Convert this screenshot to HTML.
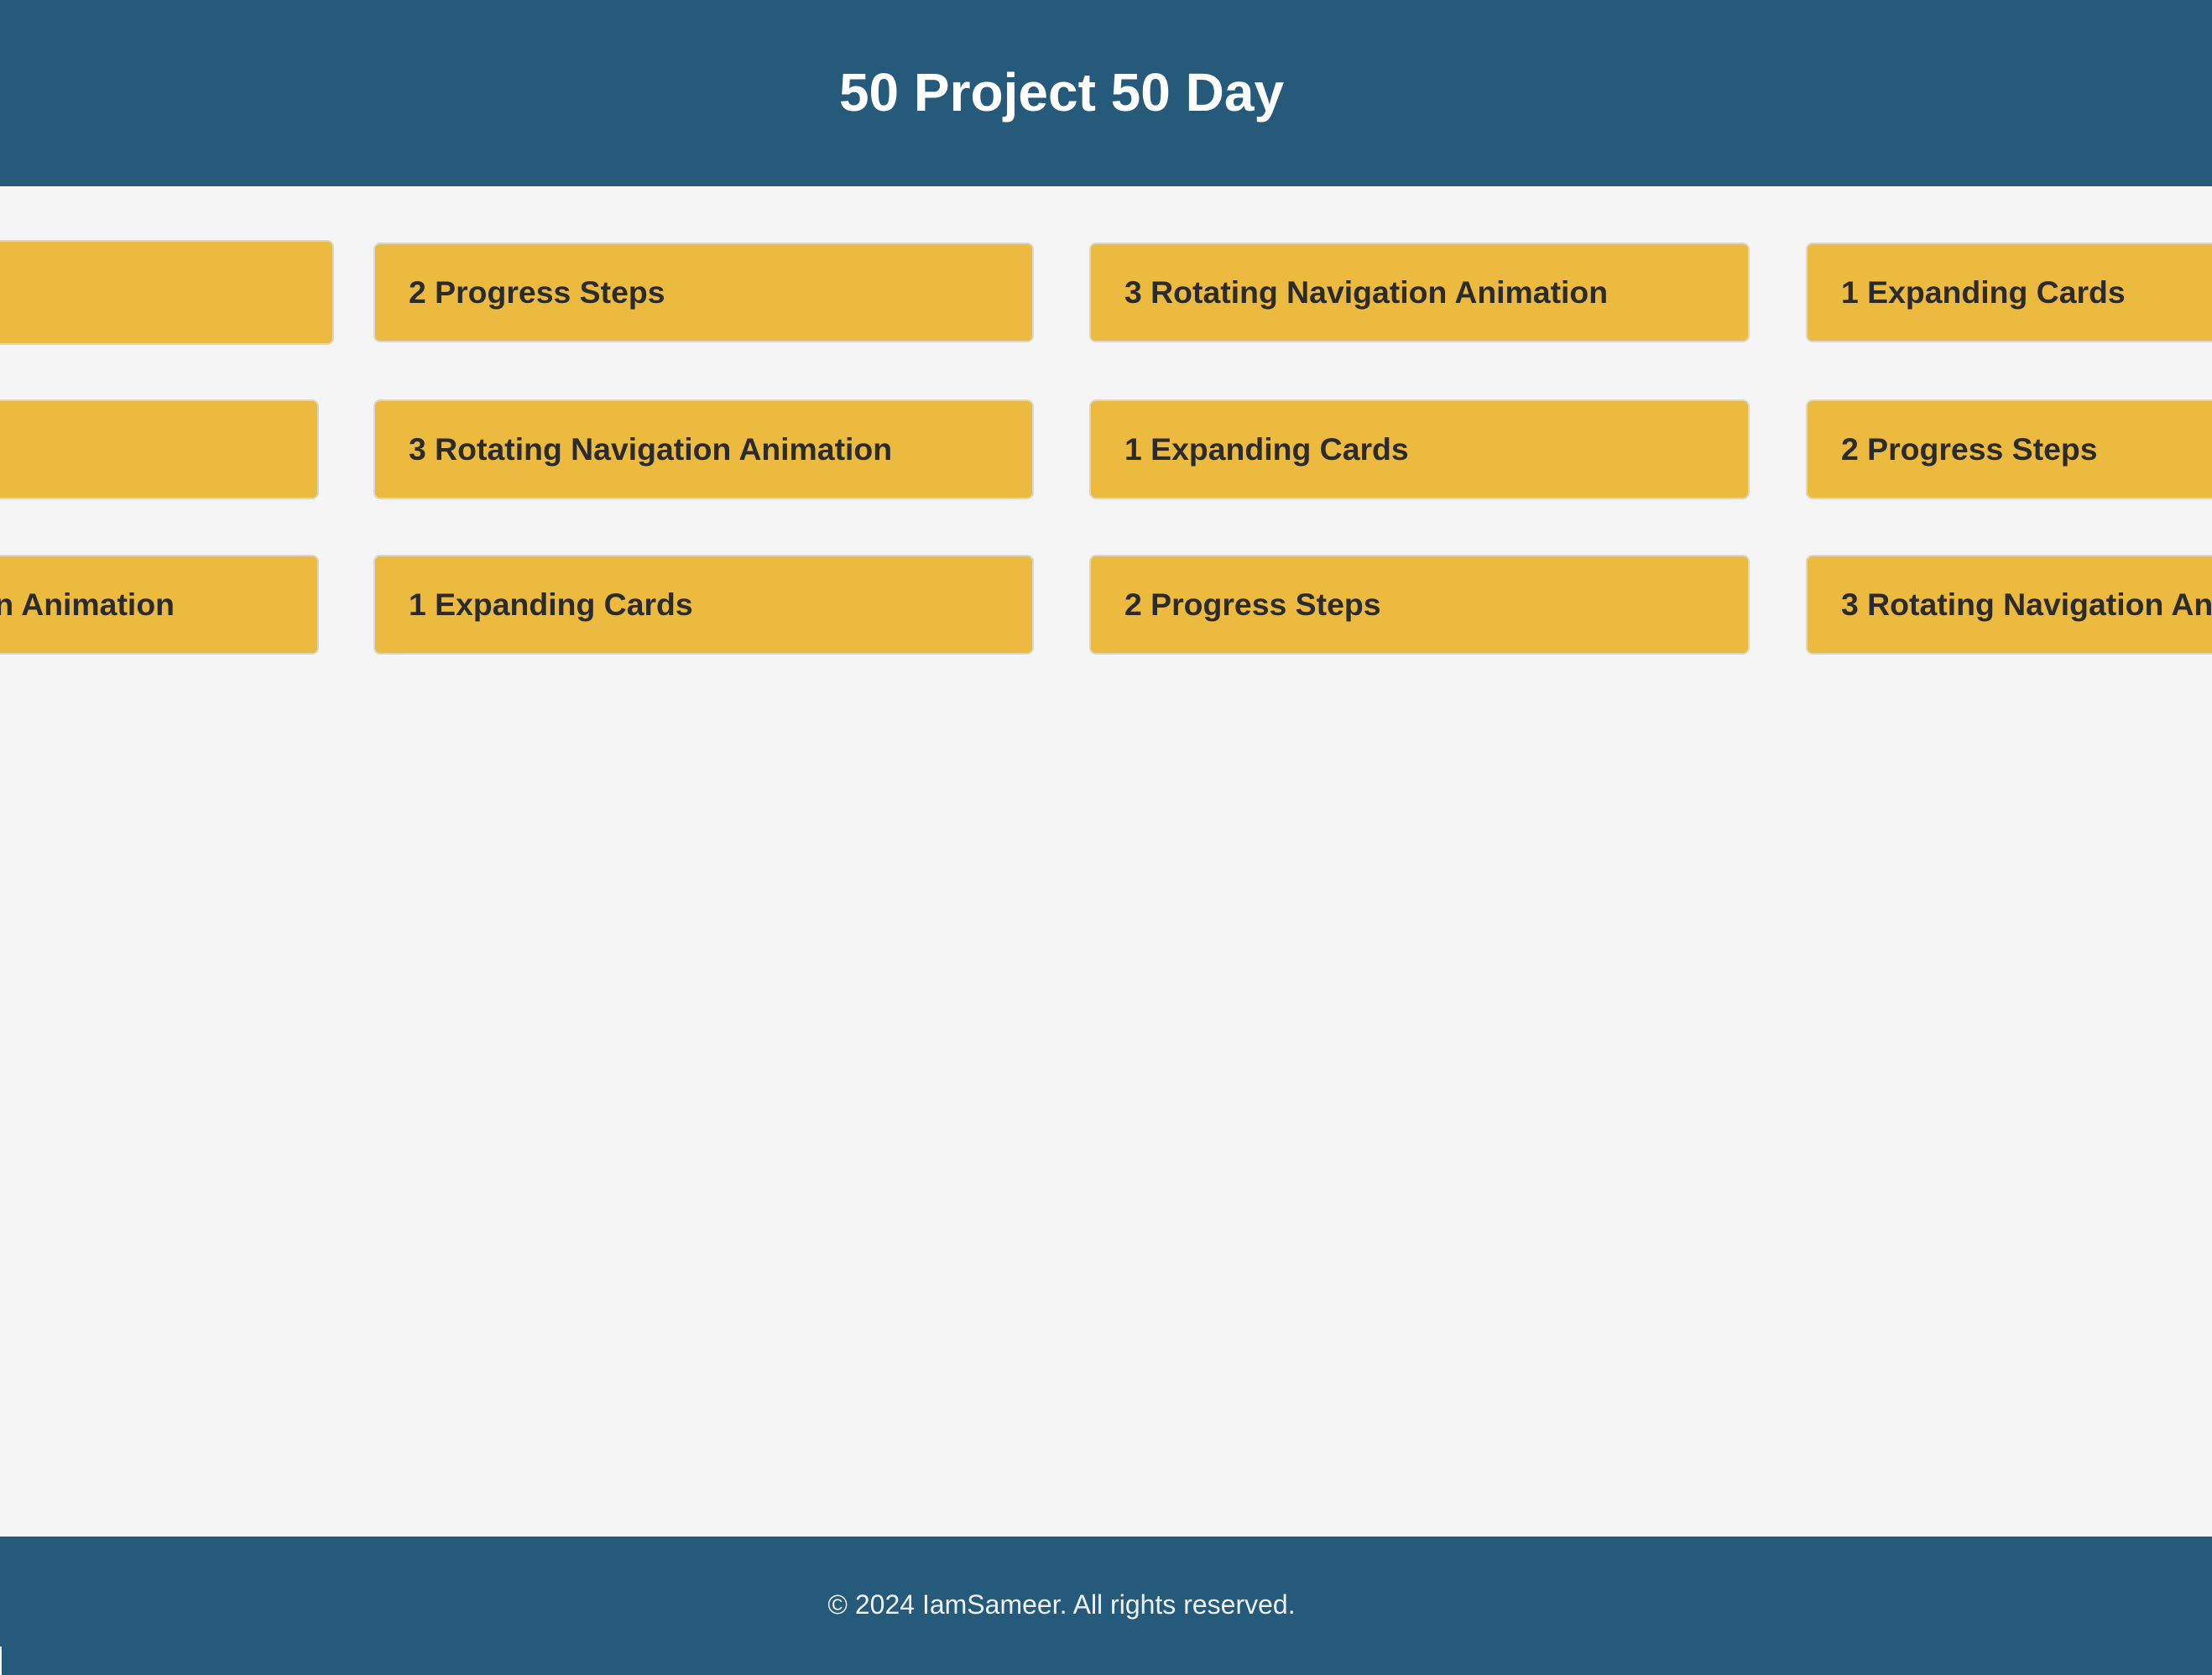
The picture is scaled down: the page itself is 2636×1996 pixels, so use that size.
<!DOCTYPE html>
<html><head><meta charset="utf-8"><style>
*{margin:0;padding:0;box-sizing:border-box}
html,body{width:2636px;height:1996px;overflow:hidden;background:#f5f5f5;font-family:"Liberation Sans",Arial,sans-serif}
.hdr{position:absolute;left:0;top:0;width:2636px;height:222px;background:#255a7a}
.hdr h1{position:absolute;left:0;width:2530px;top:72px;text-align:center;color:#fff;font-size:64px;font-weight:bold;line-height:76px}
.ftr{position:absolute;left:0;top:1831px;width:2636px;height:165px;background:#255a7a}
.ftr p{position:absolute;left:0;width:2530px;top:62px;text-align:center;color:#eef2f5;font-size:32px;line-height:38px}
.c{position:absolute;width:787px;height:119px;background:#ebba3f;border:2px solid #dcd6c4;border-radius:8px;color:#2b2b2b;font-weight:bold;font-size:37.4px;line-height:115px;padding-left:40px;white-space:nowrap;overflow:hidden}
.r{width:490px;border-right:none;border-radius:8px 0 0 8px}
.bar{position:absolute;left:0;top:1962px;width:2px;height:34px;background:#fff}
</style></head><body>
<div class="hdr"><h1>50 Project 50 Day</h1></div>

<div class="c" style="left:-428px;top:286px;width:826px;height:125px"></div>
<div class="c" style="left:445px;top:289px">2 Progress Steps</div>
<div class="c" style="left:1298px;top:289px">3 Rotating Navigation Animation</div>
<div class="c r" style="left:2152px;top:289px">1 Expanding Cards</div>

<div class="c" style="left:-407px;top:476px">2 Progress Steps</div>
<div class="c" style="left:445px;top:476px">3 Rotating Navigation Animation</div>
<div class="c" style="left:1298px;top:476px">1 Expanding Cards</div>
<div class="c r" style="left:2152px;top:476px">2 Progress Steps</div>

<div class="c" style="left:-407px;top:661px;padding-left:0"><span style="position:absolute;right:170px">3 Rotating Navigation Animation</span></div>
<div class="c" style="left:445px;top:661px">1 Expanding Cards</div>
<div class="c" style="left:1298px;top:661px">2 Progress Steps</div>
<div class="c r" style="left:2152px;top:661px">3 Rotating Navigation Animation</div>

<div class="ftr"><p>© 2024 IamSameer. All rights reserved.</p></div>
<div class="bar"></div>
</body></html>
